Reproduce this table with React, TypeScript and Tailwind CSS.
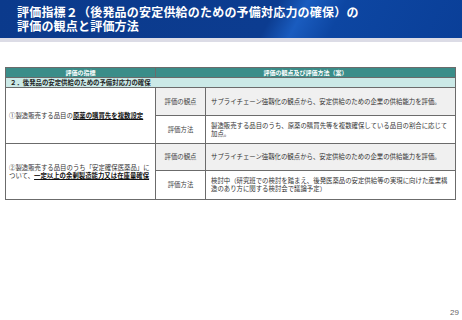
const jp = { fontFamily: '"Noto Sans CJK JP", "Noto Sans", sans-serif' };

const cell = "border border-[#6b6b6b] text-[6.4px] leading-[8px] text-[#333]";

export default function App() {
    return (
        <div className="w-[462px] h-[320px] bg-white relative overflow-hidden" style={jp}>
            <div className="h-[38px] bg-[linear-gradient(118deg,#0b3a8c_0%,#0c3c90_58%,#1a5cbf_64%,#0d46a2_72%,#0a3f98_100%)] pl-[17px] pt-[5px]">
                <h1 className="text-white font-bold text-[12px] leading-[14px] tracking-[0.2px]">
                    <div>評価指標２（後発品の安定供給のための予備対応力の確保）の</div>
                    <div>評価の観点と評価方法</div>
                </h1>
            </div>
            <div className="h-[4px] bg-[#dcdce6]"></div>

            <div className="pl-[5px] pt-[25px]">
                <table className="table-fixed border-collapse w-[450px]">
                    <colgroup>
                        <col className="w-[150px]" />
                        <col className="w-[50px]" />
                        <col className="w-[250px]" />
                    </colgroup>
                    <tbody>
                        <tr className="h-[10px] bg-[#3a8d89]">
                            <td className="border border-[#6b6b6b] text-[6px] leading-[9px] text-white font-bold text-center">評価の指標</td>
                            <td colSpan={2} className="border border-[#6b6b6b] text-[6px] leading-[9px] text-white font-bold text-center">評価の観点及び評価方法（案）</td>
                        </tr>
                        <tr className="h-[10px] bg-[#cbe9e7]">
                            <td colSpan={3} className="border border-[#6b6b6b] text-[6.4px] leading-[9px] text-[#1f1f1f] font-bold pl-[4px]">
                                ２．後発品の安定供給のための予備対応力の確保
                            </td>
                        </tr>
                        <tr className="h-[28px]">
                            <td rowSpan={2} className={`${cell} pl-[3px] whitespace-nowrap`}>
                                ①製造販売する品目の<span className="font-bold underline text-[#111]">原薬の購買先を複数設定</span>
                            </td>
                            <td className={`${cell} bg-[#f0f0f0] text-center text-[#444]`}>評価の観点</td>
                            <td className={`${cell} bg-[#f0f0f0] pl-[5px]`}>サプライチェーン強靱化の観点から、安定供給のための企業の供給能力を評価。</td>
                        </tr>
                        <tr className="h-[28px]">
                            <td className={`${cell} text-center text-[#444]`}>評価方法</td>
                            <td className={`${cell} pl-[5px] whitespace-nowrap`}>
                                製造販売する品目のうち、原薬の購買先等を複数確保している品目の割合に応じて
                                <br />
                                加点。
                            </td>
                        </tr>
                        <tr className="h-[27px]">
                            <td rowSpan={2} className={`${cell} pl-[3px] whitespace-nowrap`}>
                                ②製造販売する品目のうち「安定確保医薬品」に
                                <br />
                                ついて、<span className="font-bold underline text-[#111]">一定以上の余剰製造能力又は在庫量確保</span>
                            </td>
                            <td className={`${cell} bg-[#f0f0f0] text-center text-[#444]`}>評価の観点</td>
                            <td className={`${cell} bg-[#f0f0f0] pl-[5px]`}>サプライチェーン強靱化の観点から、安定供給のための企業の供給能力を評価。</td>
                        </tr>
                        <tr className="h-[29px]">
                            <td className={`${cell} text-center text-[#444]`}>評価方法</td>
                            <td className={`${cell} pl-[5px] whitespace-nowrap`}>
                                検討中（研究班での検討を踏まえ、後発医薬品の安定供給等の実現に向けた産業構
                                <br />
                                造のあり方に関する検討会で議論予定）
                            </td>
                        </tr>
                    </tbody>
                </table>
            </div>

            <div className="absolute right-[3px] bottom-[3px] text-[8px] leading-[9px] text-[#666]" style={{ fontFamily: '"Liberation Sans", sans-serif' }}>
                29
            </div>
        </div>
    );
}
